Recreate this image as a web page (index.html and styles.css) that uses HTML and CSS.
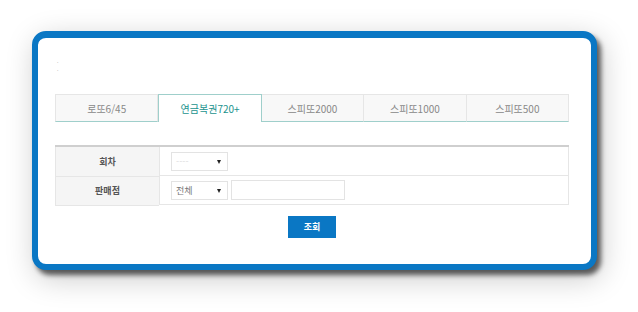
FILE: index.html
```html
<!DOCTYPE html>
<html lang="ko">
<head>
    <meta charset="UTF-8">
    <title>판매점 조회</title>
    <link rel="stylesheet" href="styles.css">
</head>
<body>
    <div class="card">
        <div class="dots"><span>.</span><span>.</span></div>
        <ul class="tabs">
            <li>로또6/45</li>
            <li class="on">연금복권720+</li>
            <li>스피또2000</li>
            <li>스피또1000</li>
            <li>스피또500</li>
        </ul>
        <table class="search">
            <tr>
                <th>회차</th>
                <td>
                    <div class="sel placeholder">----<span class="arrow"></span></div>
                </td>
            </tr>
            <tr>
                <th>판매점</th>
                <td>
                    <div class="sel">전체<span class="arrow"></span></div>
                    <div class="txt"></div>
                </td>
            </tr>
        </table>
        <div class="btns">
            <button class="btn">조회</button>
        </div>
    </div>
</body>
</html>
```

FILE: styles.css
```css
html {
    background: #fff;
}
body {
    margin: 0;
    padding: 31px 0 42px 32px;
    background: #fff;
    font-family: 'Noto Sans CJK KR', 'Noto Sans', sans-serif;
}
.card {
    box-sizing: border-box;
    width: 565px;
    height: 239px;
    border: 6px solid #0a77c4;
    border-top-width: 7px;
    border-radius: 14px;
    background: #fff;
    box-shadow: 4px 5px 5px rgba(0, 0, 0, 0.6), 4px 8px 30px rgba(0, 0, 0, 0.22);
    padding: 0 0 0 17px;
}
.dots {
    height: 56px;
    display: flex;
    flex-direction: column;
    padding: 19px 0 0 2px;
    box-sizing: border-box;
    font-size: 5px;
    line-height: 8px;
    color: #aaa;
}
.tabs {
    display: flex;
    list-style: none;
    margin: 0;
    padding: 0;
    width: 514px;
}
.tabs li {
    flex: 1;
    height: 28px;
    line-height: 28px;
    text-align: center;
    font-size: 10px;
    color: #888;
    background: #f8f8f8;
    border: 1px solid #e6e6e6;
    border-left: 0;
    border-bottom: 1px solid #9fcfcb;
    box-sizing: border-box;
}
.tabs li:first-child {
    border-left: 1px solid #e6e6e6;
}
.tabs li.on {
    background: #fff;
    color: #1b938e;
    border: 1px solid #9fcfcb;
    border-bottom: 0;
}
.search {
    margin-top: 23px;
    width: 514px;
    border-collapse: collapse;
    border-top: 2px solid #cfcfcf;
}
.search th {
    width: 103px;
    height: 28px;
    padding: 0;
    background: #f5f5f5;
    font-size: 9px;
    font-weight: bold;
    color: #555;
    border-bottom: 1px solid #e6e6e6;
    border-left: 1px solid #e6e6e6;
}
.search td {
    display: flex;
    gap: 3px;
    align-items: center;
    height: 28px;
    padding: 0 0 0 11px;
    border-bottom: 1px solid #e6e6e6;
    border-right: 1px solid #e6e6e6;
    border-left: 1px solid #e6e6e6;
}
.sel {
    position: relative;
    box-sizing: border-box;
    width: 57px;
    height: 19px;
    border: 1px solid #e3e3e3;
    font-size: 9px;
    line-height: 17px;
    padding-left: 4px;
    color: #777;
}
.sel.placeholder {
    color: #ddd;
}
.arrow {
    position: absolute;
    right: 6px;
    top: 7px;
    border-left: 2.5px solid transparent;
    border-right: 2.5px solid transparent;
    border-top: 4px solid #222;
}
.txt {
    box-sizing: border-box;
    width: 114px;
    height: 20px;
    border: 1px solid #e3e3e3;
}
.btns {
    width: 514px;
    display: flex;
    justify-content: center;
    margin-top: 10px;
}
.btn {
    width: 48px;
    height: 22px;
    border: 0;
    background: #0a77c4;
    color: #fff;
    font-family: 'Noto Sans CJK KR', sans-serif;
    font-size: 9px;
    font-weight: bold;
    padding: 0;
}
```
